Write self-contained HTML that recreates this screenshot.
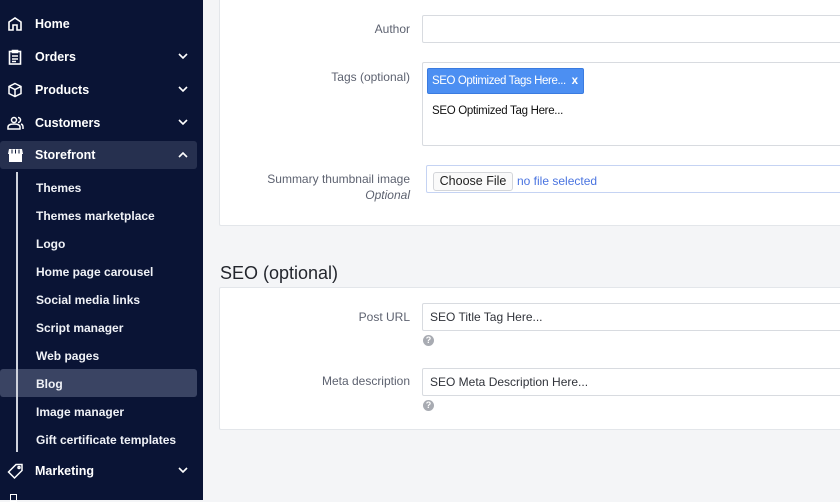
<!DOCTYPE html>
<html><head><meta charset="utf-8"><style>
*{margin:0;padding:0;box-sizing:border-box}
body{width:840px;height:500px;overflow:hidden;background:#f4f5f7;font-family:"Liberation Sans",sans-serif;position:relative}
.sb{position:absolute;left:0;top:0;width:203px;height:500px;background:#0a1435;color:#fff}
.it{position:absolute;left:0;width:197px;height:28px;font-size:12.5px;font-weight:bold;line-height:28px}
.it .lb{position:absolute;left:35px}
.it svg.ic{position:absolute;left:7px;top:6px}
.it .ch{position:absolute;left:178px;top:10px}
.sub{position:absolute;left:36px;font-size:12px;font-weight:bold;line-height:16px;color:#f0f2f7}
.hl{position:absolute;left:0;width:197px;height:28px;background:#26304f;border-radius:3px}
.vl{position:absolute;left:16px;top:172px;width:2px;height:280px;background:#cfd3dd}
.card{position:absolute;left:219px;background:#fff;border:1px solid #e3e6ea;border-radius:2px;width:640px}
.lab{position:absolute;right:430px;font-size:12px;color:#5d6270;text-align:right}
.inp{position:absolute;left:422px;width:430px;height:28px;background:#fff;border:1px solid #d8dbe0;border-radius:2px;font-size:12px;color:#30333a;padding-left:7px;line-height:26px}
.q{position:absolute;left:423px;width:11px;height:11px;border-radius:50%;background:#a8abb2;color:#fff;font-size:9px;line-height:11px;text-align:center;font-weight:bold}
</style></head><body>
<div class="sb">
<div class="hl" style="top:141px"></div>
<div class="hl" style="top:369px;background:#3a4463"></div>
<div class="vl"></div>
<div class="it" style="top:10px"><svg class="ic" width="16" height="16" viewBox="0 0 16 16" fill="none" stroke="#fff" stroke-width="1.6"><path d="M2 14V6l6-4 6 4v8h-4V9H6v5z"/></svg><span class="lb">Home</span></div>
<div class="it" style="top:43px"><svg class="ic" width="16" height="16" viewBox="0 0 16 16" fill="none" stroke="#fff" stroke-width="1.6"><rect x="2.5" y="2.5" width="11" height="12.5"/><path d="M5.5 1.5h5v2h-5zM5 7h6M5 10h6M5 12.5h4"/></svg><span class="lb">Orders</span><svg class="ch" width="10" height="7" viewBox="0 0 10 7" fill="none" stroke="#fff" stroke-width="1.6"><path d="M1 1l4 4 4-4"/></svg></div>
<div class="it" style="top:76px"><svg class="ic" width="16" height="16" viewBox="0 0 16 16" fill="none" stroke="#fff" stroke-width="1.5"><path d="M8 1.5l6 3v7l-6 3-6-3v-7zM2 4.5l6 3 6-3M8 7.5v7"/></svg><span class="lb">Products</span><svg class="ch" width="10" height="7" viewBox="0 0 10 7" fill="none" stroke="#fff" stroke-width="1.6"><path d="M1 1l4 4 4-4"/></svg></div>
<div class="it" style="top:109px"><svg class="ic" width="17" height="16" viewBox="0 0 17 16" fill="none" stroke="#fff" stroke-width="1.5"><circle cx="7" cy="5" r="2.5"/><path d="M1 14v-2c0-2 2-3 6-3s6 1 6 3v2zM11 2.5a2.5 2.5 0 010 5M14 9c1.5.5 2 1.5 2 3v2"/></svg><span class="lb">Customers</span><svg class="ch" width="10" height="7" viewBox="0 0 10 7" fill="none" stroke="#fff" stroke-width="1.6"><path d="M1 1l4 4 4-4"/></svg></div>
<div class="it" style="top:141px"><svg class="ic" width="17" height="16" viewBox="0 0 17 16"><path d="M2 2h13l1 5H1z" fill="#fff"/><rect x="2" y="7" width="13" height="8" fill="#fff"/><path d="M5 2.5v4M8.5 2.5v4M12 2.5v4" stroke="#0a1435" stroke-width="1"/></svg><span class="lb">Storefront</span><svg class="ch" width="10" height="7" viewBox="0 0 10 7" fill="none" stroke="#fff" stroke-width="1.6"><path d="M1 6l4-4 4 4"/></svg></div>
<div class="sub" style="top:180px">Themes</div>
<div class="sub" style="top:208px">Themes marketplace</div>
<div class="sub" style="top:236px">Logo</div>
<div class="sub" style="top:264px">Home page carousel</div>
<div class="sub" style="top:292px">Social media links</div>
<div class="sub" style="top:320px">Script manager</div>
<div class="sub" style="top:348px">Web pages</div>
<div class="sub" style="top:376px">Blog</div>
<div class="sub" style="top:404px">Image manager</div>
<div class="sub" style="top:432px">Gift certificate templates</div>
<div class="it" style="top:457px"><svg class="ic" width="17" height="17" viewBox="0 0 17 17" fill="none" stroke="#fff" stroke-width="1.5"><path d="M1.5 9L9 1.5h6v6L7.5 15z"/><circle cx="12" cy="4.5" r="1"/></svg><span class="lb">Marketing</span><svg class="ch" width="10" height="7" viewBox="0 0 10 7" fill="none" stroke="#fff" stroke-width="1.6"><path d="M1 1l4 4 4-4"/></svg></div>
<div style="position:absolute;left:10px;top:494px;width:7px;height:8px;border:1.5px solid #fff"></div>
</div>

<div class="card" style="top:-5px;height:231px"></div>
<div class="lab" style="top:22px">Author</div>
<div class="inp" style="top:15px"></div>
<div class="lab" style="top:70px">Tags (optional)</div>
<div class="inp" style="top:62px;height:84px"></div>
<div style="position:absolute;left:427px;top:68px;width:157px;height:26px;background:#4c8ff2;border:1px solid #3a7be0;border-radius:2px;color:#fff;font-size:11.5px;line-height:24px;padding-left:4px;letter-spacing:-0.4px;white-space:nowrap;overflow:hidden">SEO Optimized Tags Here... <b style="margin-left:3px">x</b></div>
<div style="position:absolute;left:432px;top:105px;font-size:11.5px;color:#111;letter-spacing:-0.3px">SEO Optimized Tag Here...</div>
<div class="lab" style="top:172px">Summary thumbnail image</div>
<div class="lab" style="top:188px;font-style:italic">Optional</div>
<div class="inp" style="top:165px;left:426px;border-color:#c5d3f3"></div>
<div style="position:absolute;left:433px;top:172px;width:80px;height:19px;border:1px solid #d4d6da;border-radius:3px;background:#fafafa;font-size:12.5px;line-height:17px;text-align:center;color:#222">Choose File</div>
<div style="position:absolute;left:517px;top:174px;font-size:12px;color:#4a74e0">no file selected</div>

<div style="position:absolute;left:220px;top:263px;font-size:18px;color:#23262d">SEO (optional)</div>
<div class="card" style="top:287px;height:143px"></div>
<div class="lab" style="top:310px">Post URL</div>
<div class="inp" style="top:303px">SEO Title Tag Here...</div>
<div class="q" style="top:335px">?</div>
<div class="lab" style="top:374px">Meta description</div>
<div class="inp" style="top:368px">SEO Meta Description Here...</div>
<div class="q" style="top:400px">?</div>
</body></html>
